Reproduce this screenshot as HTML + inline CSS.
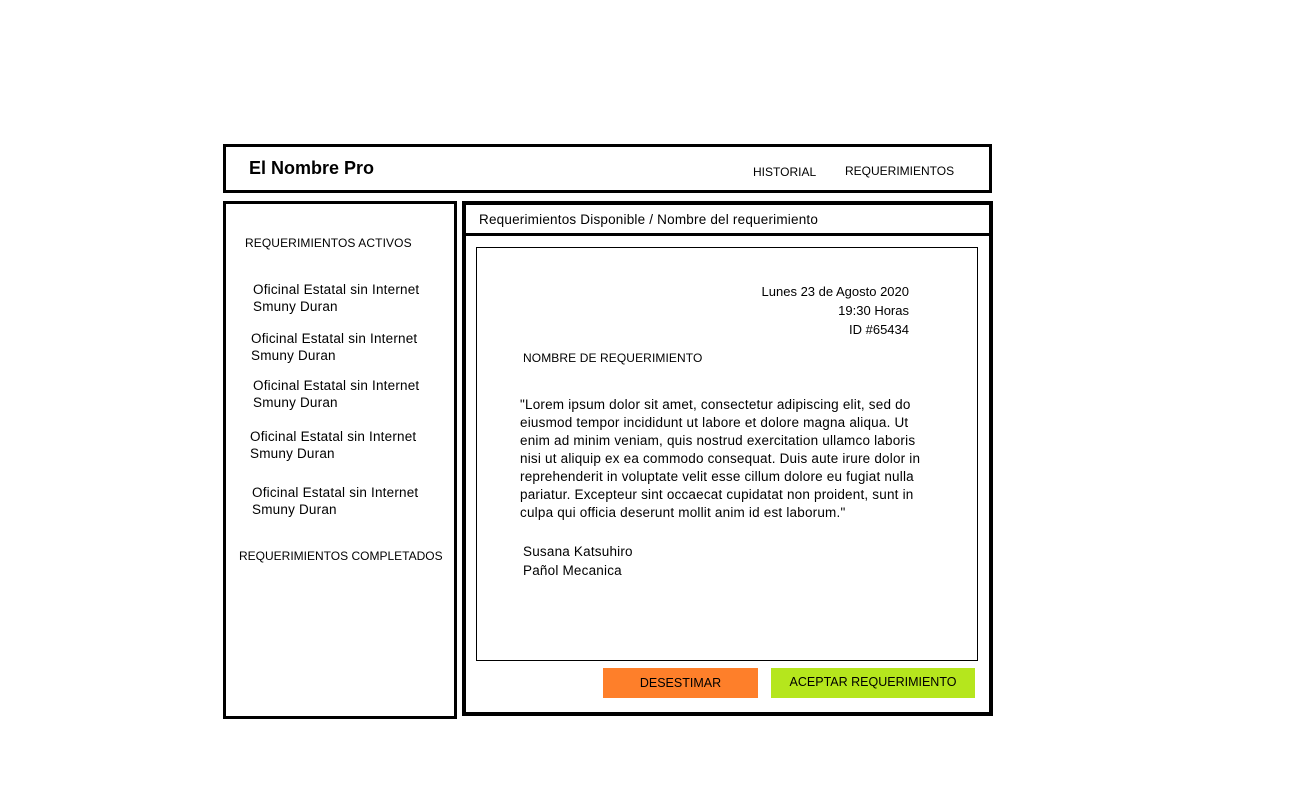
<!DOCTYPE html>
<html><head><style>
body{margin:0;width:1298px;height:801px;background:#fff;position:relative;font-family:"Liberation Sans",sans-serif;font-size:12.5px;color:#000;overflow:hidden}
.a{position:absolute;white-space:nowrap}
.box{position:absolute;box-sizing:border-box;border:3px solid #000}
.w{font-size:13.5px;letter-spacing:0.2px}
</style></head><body>
<div class="box" style="left:223px;top:144px;width:769px;height:49px"></div>
<div class="a" style="left:249px;top:158px;font-size:18px;font-weight:bold">El Nombre Pro</div>
<div class="a" style="left:753px;top:165px;font-size:12px">HISTORIAL</div>
<div class="a" style="left:845px;top:164px;font-size:12px">REQUERIMIENTOS</div>

<div class="box" style="left:223px;top:201px;width:234px;height:518px"></div>
<div class="a" style="left:245px;top:236px;font-size:12px;letter-spacing:0.1px">REQUERIMIENTOS ACTIVOS</div>
<div class="a w" style="left:253px;top:281px;line-height:17px">Oficinal Estatal sin Internet<br>Smuny Duran</div>
<div class="a w" style="left:251px;top:330px;line-height:17px">Oficinal Estatal sin Internet<br>Smuny Duran</div>
<div class="a w" style="left:253px;top:377px;line-height:17px">Oficinal Estatal sin Internet<br>Smuny Duran</div>
<div class="a w" style="left:250px;top:428px;line-height:17px">Oficinal Estatal sin Internet<br>Smuny Duran</div>
<div class="a w" style="left:252px;top:484px;line-height:17px">Oficinal Estatal sin Internet<br>Smuny Duran</div>
<div class="a" style="left:239px;top:549px;font-size:12px">REQUERIMIENTOS COMPLETADOS</div>

<div class="box" style="left:462px;top:201px;width:531px;height:515px;border-width:4px"></div>
<div style="position:absolute;left:462px;top:233px;width:531px;height:3px;background:#000"></div>
<div class="a w" style="left:479px;top:212px">Requerimientos Disponible / Nombre del requerimiento</div>
<div class="box" style="left:476px;top:247px;width:502px;height:414px;border-width:1px"></div>
<div class="a" style="left:700px;top:282px;width:209px;text-align:right;line-height:19px;font-size:13px">Lunes 23 de Agosto 2020<br>19:30 Horas<br>ID #65434</div>
<div class="a" style="left:523px;top:351px;font-size:12px;letter-spacing:0.1px">NOMBRE DE REQUERIMIENTO</div>
<div class="a w" style="left:520px;top:396px;line-height:18px">"Lorem ipsum dolor sit amet, consectetur adipiscing elit, sed do<br>eiusmod tempor incididunt ut labore et dolore magna aliqua. Ut<br>enim ad minim veniam, quis nostrud exercitation ullamco laboris<br>nisi ut aliquip ex ea commodo consequat. Duis aute irure dolor in<br>reprehenderit in voluptate velit esse cillum dolore eu fugiat nulla<br>pariatur. Excepteur sint occaecat cupidatat non proident, sunt in<br>culpa qui officia deserunt mollit anim id est laborum."</div>
<div class="a w" style="left:523px;top:542px;line-height:19px">Susana Katsuhiro<br>Pañol Mecanica</div>
<div class="a" style="left:603px;top:668px;width:155px;height:30px;background:#fe7f2a;text-align:center;line-height:30px;font-size:12.5px">DESESTIMAR</div>
<div class="a" style="left:771px;top:668px;width:204px;height:30px;background:#b5e61d;text-align:center;line-height:28px;font-size:12.5px">ACEPTAR REQUERIMIENTO</div>
</body></html>
